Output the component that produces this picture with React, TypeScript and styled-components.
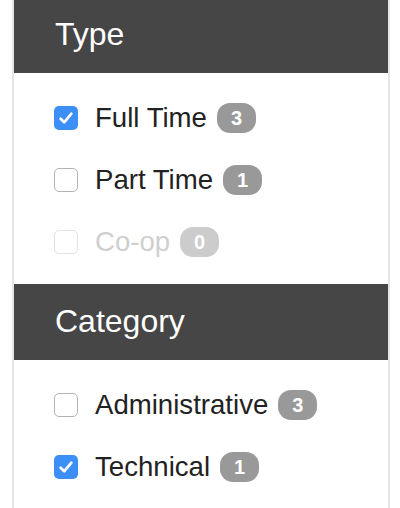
import React from "react";
import styled, { createGlobalStyle } from "styled-components";

const Global = createGlobalStyle`
  html, body { margin: 0; padding: 0; background: #ffffff; }
  body { font-family: "Liberation Sans", Arial, sans-serif; }
`;

const Panel = styled.div`
  margin: -3px 10px 0 12px;
  border-left: 2px solid #e6e6e6;
  border-right: 2px solid #e6e6e6;
  background: #ffffff;
`;

const Header = styled.div`
  height: 76px;
  background: #464646;
  color: #ffffff;
  font-size: 32px;
  display: flex;
  align-items: center;
  padding-left: 41px;
  padding-bottom: 1px;
  box-sizing: border-box;
`;

const List = styled.div`
  display: flex;
  flex-direction: column;
  padding: 14px 0 11px 40px;
`;

const Row = styled.label<{ $disabled?: boolean }>`
  height: 62px;
  display: flex;
  align-items: center;
  font-size: 27.6px;
  color: ${(p) => (p.$disabled ? "#cfcfcf" : "#222222")};
`;

const Box = styled.span<{ $checked?: boolean; $disabled?: boolean }>`
  width: 24px;
  height: 24px;
  box-sizing: border-box;
  border-radius: 5px;
  flex: none;
  display: flex;
  align-items: center;
  justify-content: center;
  margin-right: 17px;
  background: ${(p) => (p.$checked ? "#3b8ff6" : "#ffffff")};
  border: ${(p) =>
    p.$checked ? "none" : `1px solid ${p.$disabled ? "#e2e2e2" : "#b4b4b4"}`};
`;

const Label = styled.span`
  white-space: nowrap;
`;

const Badge = styled.span<{ $disabled?: boolean }>`
  margin-left: 10px;
  height: 30px;
  min-width: 39px;
  padding: 0 10px;
  box-sizing: border-box;
  border-radius: 13px;
  background: ${(p) => (p.$disabled ? "#cccccc" : "#999999")};
  color: #ffffff;
  font-weight: bold;
  font-size: 20px;
  display: inline-flex;
  align-items: center;
  justify-content: center;
`;

type Item = { label: string; count: number; checked?: boolean; disabled?: boolean };

const Check = () => (
  <svg width="18" height="18" viewBox="0 0 16 16">
    <path d="M3.2 8.6 L6.4 11.8 L12.8 4.2" fill="none" stroke="#ffffff" strokeWidth="2.4" strokeLinecap="round" strokeLinejoin="round" />
  </svg>
);

const Group = ({ title, items }: { title: string; items: Item[] }) => (
  <>
    <Header>{title}</Header>
    <List>
      {items.map((it) => (
        <Row key={it.label} $disabled={it.disabled}>
          <Box $checked={it.checked} $disabled={it.disabled}>
            {it.checked && <Check />}
          </Box>
          <Label>{it.label}</Label>
          <Badge $disabled={it.disabled}>{it.count}</Badge>
        </Row>
      ))}
    </List>
  </>
);

export default function App() {
  return (
    <>
      <Global />
      <Panel>
        <Group
          title="Type"
          items={[
            { label: "Full Time", count: 3, checked: true },
            { label: "Part Time", count: 1 },
            { label: "Co-op", count: 0, disabled: true },
          ]}
        />
        <Group
          title="Category"
          items={[
            { label: "Administrative", count: 3 },
            { label: "Technical", count: 1, checked: true },
          ]}
        />
      </Panel>
    </>
  );
}
